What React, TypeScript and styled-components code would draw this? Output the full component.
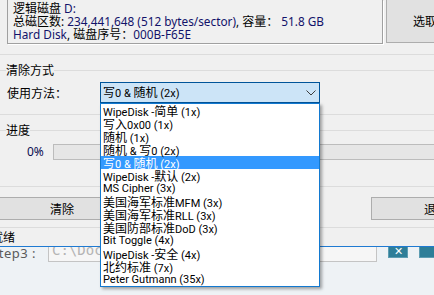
import React from "react";
import styled, { createGlobalStyle } from "styled-components";

const GlobalStyle = createGlobalStyle`
  html, body { margin: 0; padding: 0; }
  body {
    width: 434px; height: 295px; overflow: hidden;
    background: #eef2f5;
    font-family: "Noto Sans", "Noto Sans CJK SC", sans-serif;
    font-size: 12px; color: #000;
  }
`;

const Page = styled.div`
  position: relative;
  width: 434px;
  height: 295px;
  overflow: hidden;
  display: flex;
  flex-direction: column;
`;

const Dialog = styled.div`
  position: relative;
  z-index: 1;
  display: flex;
  flex-direction: column;
  background: #f0f0f0;
  border-bottom: 1px solid #1f7ad2;
  height: 247px;
  box-sizing: border-box;
`;

const Cjk = styled.span`
  font-family: "Noto Sans CJK SC", sans-serif;
  font-size: 12px;
`;

const CJK_RE = /([\u3000-\u303f\u4e00-\u9fff\uff00-\uffef]+)/;
const mix = (text: string) =>
  text
    .split(CJK_RE)
    .filter(Boolean)
    .map((part, i) =>
      CJK_RE.test(part) ? <Cjk key={i}>{part}</Cjk> : <React.Fragment key={i}>{part}</React.Fragment>
    );

const TopSection = styled.div`
  display: flex;
  align-items: flex-start;
  gap: 3px;
  height: 55px;
  box-sizing: border-box;
  border-bottom: 1px solid #dcdcdc;
  padding-left: 7px;
`;

const InfoBox = styled.div`
  width: 376px;
  height: 44px;
  box-sizing: border-box;
  border: 1px solid #a0a0a0;
  border-top: none;
  box-shadow: 1px 1px 0 #ffffff;
  padding: 1px 0 0 5px;
  line-height: 13px;
  font-size: 11.8px;
  white-space: pre;
  flex: none;
`;

const InfoLine = styled.div`
  height: 13px;
`;

const Val = styled.span`
  color: #12126a;
`;

const WinButton = styled.button<{ $w: number; $h: number; $shift?: number }>`
  flex: none;
  width: ${(p) => p.$w}px;
  height: ${(p) => p.$h}px;
  margin-left: ${(p) => p.$shift ?? 0}px;
  box-sizing: border-box;
  background: #e1e1e1;
  border: 1px solid #adadad;
  font-family: inherit;
  font-size: 12px;
  color: #000;
  padding: 0;
  text-align: center;
`;

const TopButton = styled(WinButton)`
  border-top: none;
`;

const Group = styled.fieldset<{ $mt: number; $pt: number; $pb: number }>`
  margin: ${(p) => p.$mt}px 0 0 0;
  padding: ${(p) => p.$pt}px 0 ${(p) => p.$pb}px 0;
  border: none;
  border-top: 1px solid #dcdcdc;
  border-bottom: 1px solid #dcdcdc;
  min-width: 0;
`;

const Legend = styled.legend`
  margin-left: 6px;
  padding: 0;
  line-height: 13px;
  height: 13px;
  font-size: 12px;
`;

const FieldRow = styled.div`
  display: flex;
  align-items: center;
  padding-left: 7px;
`;

const Label = styled.span`
  width: 93px;
  flex: none;
`;

const Combo = styled.div`
  width: 220px;
  height: 21px;
  box-sizing: border-box;
  border: 1px solid #005499;
  background: #cce4f7;
  display: flex;
  align-items: center;
  justify-content: space-between;
  padding: 0 3px 0 2px;
  line-height: 13px;
  font-family: Roboto, "Noto Sans CJK SC", sans-serif;
  font-size: 11px;
`;

const ProgressRow = styled.div`
  display: flex;
  align-items: center;
  gap: 9px;
  padding-left: 27px;
`;

const Percent = styled.span`
  color: #0c0c50;
  line-height: 16px;
`;

const Bar = styled.div`
  flex: none;
  width: 420px;
  height: 16px;
  box-sizing: border-box;
  border: 1px solid #bcbcbc;
  background: #e6e6e6;
`;

const ButtonRow = styled.div`
  display: flex;
  gap: 244px;
  margin-top: 10px;
`;

const Status = styled.div`
  margin-top: 7px;
  border-top: 1px solid #dcdcdc;
  padding: 2px 0 0 0;
  margin-left: -9px;
  line-height: 16px;
`;

const DropList = styled.ul`
  position: absolute;
  left: 100px;
  top: 103px;
  width: 220px;
  height: 184px;
  box-sizing: border-box;
  margin: 0;
  padding: 0;
  list-style: none;
  background: #fff;
  border: 1px solid #1279d0;
  box-shadow: 2px 2px 3px rgba(0, 0, 0, 0.35);
  z-index: 5;
  font-family: Roboto, "Noto Sans CJK SC", sans-serif;
  font-size: 11px;
`;

const Item = styled.li<{ $sel?: boolean }>`
  height: 13px;
  line-height: 13px;
  padding-left: 2px;
  white-space: nowrap;
  background: ${(p) => (p.$sel ? "#3399ff" : "transparent")};
  color: ${(p) => (p.$sel ? "#fff" : "#000")};
`;

const BackRow = styled.div`
  display: flex;
  align-items: flex-start;
  margin-top: -8px;
`;

const BackLabel = styled.span`
  flex: none;
  width: 56px;
  margin-left: -8px;
  padding-top: 6px;
  line-height: 16px;
  font-size: 13px;
  color: #5a5a5a;
  letter-spacing: 0.5px;
`;

const PathInput = styled.div`
  flex: none;
  width: 329px;
  height: 23px;
  box-sizing: border-box;
  border: 1px solid #c4c4c4;
  background: #f6f6f6;
  color: #b4b4b4;
  font-family: "DejaVu Sans Mono", monospace;
  font-size: 14px;
  line-height: 20px;
  padding-left: 3px;
`;

const TealButton = styled.div`
  flex: none;
  width: 20px;
  height: 19px;
  margin-left: 11px;
  box-sizing: border-box;
  background: #2e7e98;
  border: 1px solid #5d9db2;
  color: #fff;
  display: flex;
  align-items: flex-end;
  justify-content: center;
  font-size: 11px;
  line-height: 12px;
`;

const items = [
  "WipeDisk -简单 (1x)",
  "写入0x00 (1x)",
  "随机 (1x)",
  "随机 & 写0 (2x)",
  "写0 & 随机 (2x)",
  "WipeDisk -默认 (2x)",
  "MS Cipher (3x)",
  "美国海军标准MFM (3x)",
  "美国海军标准RLL (3x)",
  "美国防部标准DoD (3x)",
  "Bit Toggle (4x)",
  "WipeDisk -安全 (4x)",
  "北约标准 (7x)",
  "Peter Gutmann (35x)",
];

export default function App() {
  return (
    <Page>
      <GlobalStyle />
      <Dialog>
        <TopSection>
          <InfoBox>
            <InfoLine>
              {mix("逻辑磁盘 ")}
              <Val>D:</Val>
            </InfoLine>
            <InfoLine>
              {mix("总磁区数: ")}
              <Val>234,441,648 (512 bytes/sector)</Val>
              {mix(", 容量： ")}
              <Val>51.8 GB</Val>
            </InfoLine>
            <InfoLine>
              <Val>Hard Disk</Val>
              {mix(", 磁盘序号：")}
              <Val>000B-F65E</Val>
            </InfoLine>
          </InfoBox>
          <TopButton $w={78} $h={43}>
            选取
          </TopButton>
        </TopSection>

        <Group $mt={9} $pt={5} $pb={11}>
          <Legend>清除方式</Legend>
          <FieldRow>
            <Label>使用方法：</Label>
            <Combo>
              <span>{mix("写0 & 随机 (2x)")}</span>
              <svg width="10" height="6" viewBox="0 0 10 6">
                <path d="M0.5 0.5 L5 5 L9.5 0.5" fill="none" stroke="#3c3c3c" strokeWidth="1" />
              </svg>
            </Combo>
          </FieldRow>
        </Group>

        <Group $mt={9} $pt={7} $pb={26}>
          <Legend>进度</Legend>
          <ProgressRow>
            <Percent>0%</Percent>
            <Bar />
          </ProgressRow>
        </Group>

        <ButtonRow>
          <WinButton $w={130} $h={23} $shift={-3}>
            清除
          </WinButton>
          <WinButton $w={130} $h={23}>
            退出
          </WinButton>
        </ButtonRow>

        <Status>就绪</Status>
      </Dialog>

      <BackRow>
        <BackLabel>step3 :</BackLabel>
        <PathInput>C:\Doc</PathInput>
        <TealButton>✕</TealButton>
        <TealButton />
      </BackRow>

      <DropList>
        {items.map((t, i) => (
          <Item key={t} $sel={i === 4}>
            {mix(t)}
          </Item>
        ))}
      </DropList>
    </Page>
  );
}
